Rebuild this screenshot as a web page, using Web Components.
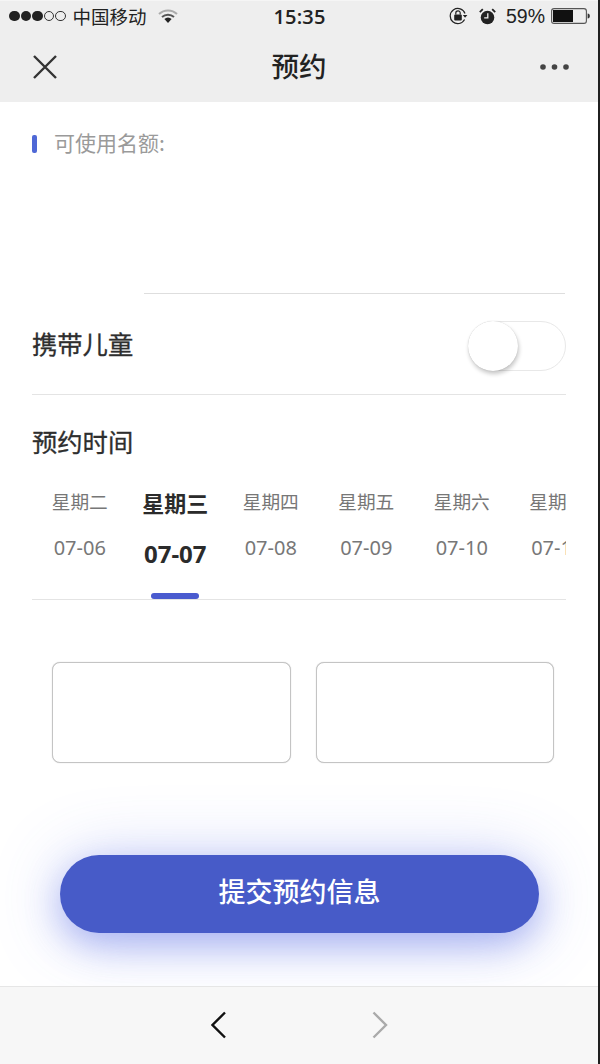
<!DOCTYPE html>
<html lang="zh">
<head>
<meta charset="utf-8">
<title>预约</title>
<style>
  html, body { margin: 0; background: #fff; }
  body { font-family: "Noto Sans CJK SC", "Noto Sans", sans-serif; }
  booking-page { width: 600px; height: 1064px; }
</style>
</head>
<body>
<booking-page>
  <status-bar></status-bar>
  <nav-bar title="预约"></nav-bar>
  <quota-section label="可使用名额:"></quota-section>
  <toggle-row label="携带儿童"></toggle-row>
  <day-picker title="预约时间"></day-picker>
  <slot-list>
    <slot-card></slot-card>
    <slot-card></slot-card>
  </slot-list>
  <submit-button label="提交预约信息"></submit-button>
  <browser-footer></browser-footer>
</booking-page>

<script>
class BookingPage extends HTMLElement {
  constructor() {
    super();
    this.attachShadow({ mode: 'open' });
    this.shadowRoot.innerHTML = `
      <style>
        :host { display: flex; background: #1f1f1f; }
        .screen {
          flex: 0 0 598px;
          height: 1064px;
          display: flex;
          flex-direction: column;
          background: #fff;
          overflow: hidden;
        }
        .edge { flex: 1; }
      </style>
      <div class="screen"><slot></slot></div>
      <div class="edge"></div>
    `;
  }
}

class StatusBar extends HTMLElement {
  constructor() {
    super();
    this.attachShadow({ mode: 'open' });
    this.shadowRoot.innerHTML = `
      <style>
        :host {
          display: grid;
          grid-template-columns: 1fr auto 1fr;
          align-items: center;
          height: 34px;
          box-sizing: border-box;
          padding: 0 8px 3px 9px;
          border-top: 1px solid #f5f5f5;
          background: #eee;
          color: #222;
        }
        .left, .right { display: flex; align-items: center; }
        .right { justify-content: flex-end; }
        .dots { display: flex; gap: 1px; margin-right: 7px; }
        .dots i {
          width: 10.5px;
          height: 10.5px;
          border-radius: 50%;
          background: #222;
          box-sizing: border-box;
        }
        .dots i.off { background: none; border: 1px solid #333; }
        .carrier { font-size: 18.5px; line-height: 30px; }
        .wifi { margin-left: 11px; }
        .time {
          font: 600 20px "Open Sans", "Liberation Sans", sans-serif;
          letter-spacing: .2px;
        }
        .pct { font: 19.5px "Liberation Sans", sans-serif; margin: 0 6px 0 10px; }
        .alarm { margin-left: 11px; }
      </style>
      <div class="left">
        <div class="dots"><i></i><i></i><i></i><i class="off"></i><i class="off"></i></div>
        <span class="carrier">中国移动</span>
        <svg class="wifi" width="20" height="16" viewBox="0 0 20 16">
          <path d="M1 6a13 13 0 0 1 18 0" fill="none" stroke="#aaa" stroke-width="2"/>
          <path d="M4 9a9 9 0 0 1 12 0" fill="none" stroke="#555" stroke-width="2"/>
          <path d="M10 15l-3.6-4a5 5 0 0 1 7.2 0z" fill="#222"/>
        </svg>
      </div>
      <div class="time">15:35</div>
      <div class="right">
        <svg width="19" height="18" viewBox="0 0 19 18">
          <path d="M15.6 12.5A7.6 7.6 0 1 1 16 6.5" fill="none" stroke="#222" stroke-width="1.2"/>
          <path d="M13.8 8h4.6l-2.3 2.8z" fill="#222"/>
          <rect x="5.2" y="7.6" width="7.6" height="5.8" rx="1" fill="#222"/>
          <path d="M6.8 7.6V6a2.2 2.2 0 0 1 4.4 0v1.6" fill="none" stroke="#222" stroke-width="1.2"/>
        </svg>
        <svg class="alarm" width="17" height="17" viewBox="0 0 17 17">
          <circle cx="8.5" cy="9.5" r="6.8" fill="#222"/>
          <path d="M.8 4.2L3.8 1.2M16.2 4.2L13.2 1.2" stroke="#222" stroke-width="1.8"/>
          <path d="M8.8 5.2v4.6H5.2" fill="none" stroke="#eee" stroke-width="1.3"/>
        </svg>
        <span class="pct">59%</span>
        <svg width="39" height="16" viewBox="0 0 39 16">
          <rect x=".6" y=".6" width="34.8" height="14.8" rx="2.5" fill="none" stroke="#555" stroke-width="1.1"/>
          <rect x="2" y="2" width="20" height="12" fill="#111"/>
          <path d="M36.6 5.5c1.6 0 2.2 1 2.2 2.5s-.6 2.5-2.2 2.5z" fill="#333"/>
        </svg>
      </div>
    `;
  }
}

class NavBar extends HTMLElement {
  constructor() {
    super();
    this.attachShadow({ mode: 'open' });
  }

  connectedCallback() {
    this.shadowRoot.innerHTML = `
      <style>
        :host {
          display: flex;
          align-items: center;
          justify-content: space-between;
          height: 68px;
          padding: 0 28px 0 32px;
          background: #eee;
          color: #222;
        }
        h1 { margin: 0 0 5px; font-size: 27.5px; font-weight: 500; line-height: 62px; }
        svg { display: block; margin-bottom: 2px; }
      </style>
      <svg width="26" height="26" viewBox="0 0 26 26">
        <path d="M2 2l22 22M24 2L2 24" stroke="#333" stroke-width="2.4" fill="none"/>
      </svg>
      <h1>${this.getAttribute('title')}</h1>
      <svg width="30" height="8" viewBox="0 0 30 8">
        <circle cx="3" cy="4" r="2.8" fill="#444"/>
        <circle cx="14.5" cy="4" r="2.8" fill="#444"/>
        <circle cx="26" cy="4" r="2.8" fill="#444"/>
      </svg>
    `;
  }
}

class QuotaSection extends HTMLElement {
  constructor() {
    super();
    this.attachShadow({ mode: 'open' });
  }

  connectedCallback() {
    this.shadowRoot.innerHTML = `
      <style>
        :host {
          display: block;
          height: 192px;
          box-sizing: border-box;
          padding: 27px 33px 0 32px;
        }
        .label {
          display: flex;
          align-items: center;
          gap: 17px;
          height: 30px;
          color: #9a9a9a;
          font-size: 21px;
        }
        .label span { padding-bottom: 3px; }
        .label i { width: 5px; height: 18px; border-radius: 2px; background: #4f68d6; }
        .rule { margin: 134px 0 0 112px; height: 1px; background: #dedede; }
      </style>
      <div class="label"><i></i><span>${this.getAttribute('label')}</span></div>
      <div class="rule"></div>
    `;
  }
}

class ToggleRow extends HTMLElement {
  constructor() {
    super();
    this.attachShadow({ mode: 'open' });
  }

  connectedCallback() {
    this.shadowRoot.innerHTML = `
      <style>
        :host {
          display: flex;
          align-items: center;
          justify-content: space-between;
          height: 101px;
          box-sizing: border-box;
          margin: 0 32px;
          padding-bottom: 1px;
          border-bottom: 1px solid #e4e4e4;
          color: #2e2e2e;
        }
        span { font-size: 25.3px; -webkit-text-stroke: .3px #2e2e2e; }
        .track {
          display: flex;
          width: 98px;
          height: 50px;
          margin-top: 5px;
          box-sizing: border-box;
          border: 1px solid #e8e8e8;
          border-radius: 25px;
          background: #fff;
        }
        .knob {
          width: 50px;
          height: 50px;
          margin: -1px;
          border-radius: 50%;
          background: #fff;
          box-shadow: 1px 3px 4px rgba(0, 0, 0, .22), 0 0 1px rgba(0, 0, 0, .18);
        }
      </style>
      <span>${this.getAttribute('label')}</span>
      <div class="track"><div class="knob"></div></div>
    `;
  }
}

class DayPicker extends HTMLElement {
  constructor() {
    super();
    this.attachShadow({ mode: 'open' });
    this.days = [
      ['星期二', '07-06'],
      ['星期三', '07-07', true],
      ['星期四', '07-08'],
      ['星期五', '07-09'],
      ['星期六', '07-10'],
      ['星期日', '07-11']
    ];
  }

  connectedCallback() {
    this.shadowRoot.innerHTML = `
      <style>
        :host {
          display: block;
          height: 206px;
          box-sizing: border-box;
          margin: 0 32px;
          border-bottom: 1px solid #e4e4e4;
          color: #2e2e2e;
        }
        h2 {
          margin: 0;
          height: 88px;
          font-size: 25.3px;
          font-weight: 400;
          line-height: 93px;
          -webkit-text-stroke: .3px #2e2e2e;
        }
        .days { display: flex; overflow: hidden; padding-top: 6px; }
        .day {
          flex: 0 0 95.5px;
          height: 110px;
          display: flex;
          flex-direction: column;
          align-items: center;
          color: #777;
        }
        .week { height: 26px; font-size: 18.7px; line-height: 24px; }
        .date { margin-top: 20px; font: 20px/26px "Noto Sans", sans-serif; }
        .day.on { color: #2b2b2b; }
        .day.on .week { font-size: 22px; font-weight: 700; line-height: 26px; }
        .day.on .date { margin-top: 25px; font-size: 24px; font-weight: 700; line-height: 28px; }
        .day.on::after {
          content: "";
          width: 48px;
          height: 6px;
          margin-top: 25px;
          border-radius: 3px;
          background: #4a5bcf;
        }
      </style>
      <h2>${this.getAttribute('title')}</h2>
      <div class="days">
        ${this.days.map(([week, date, on]) => `
          <div class="day${on ? ' on' : ''}">
            <span class="week">${week}</span>
            <span class="date">${date}</span>
          </div>
        `).join('')}
      </div>
    `;
  }
}

class SlotList extends HTMLElement {
  constructor() {
    super();
    this.attachShadow({ mode: 'open' });
    this.shadowRoot.innerHTML = `
      <style>
        :host {
          display: grid;
          grid-template-columns: 239px 238px;
          column-gap: 25px;
          padding: 62px 0 0 52px;
        }
      </style>
      <slot></slot>
    `;
  }
}

class SlotCard extends HTMLElement {
  constructor() {
    super();
    this.attachShadow({ mode: 'open' });
    this.shadowRoot.innerHTML = `
      <style>
        :host {
          display: block;
          height: 101px;
          box-sizing: border-box;
          border: 1px solid #c4c4c4;
          border-radius: 8px;
          background: #fff;
          box-shadow: 0 0 1px rgba(0, 0, 0, .25);
        }
      </style>
      <slot></slot>
    `;
  }
}

class SubmitButton extends HTMLElement {
  constructor() {
    super();
    this.attachShadow({ mode: 'open' });
  }

  connectedCallback() {
    this.shadowRoot.innerHTML = `
      <style>
        :host { display: block; padding: 92px 59px 0 60px; height: 223px; box-sizing: border-box; }
        div {
          height: 78px;
          border-radius: 39px;
          background: #475bc8;
          box-shadow: 0 12px 34px rgba(80, 100, 230, .38), 0 4px 70px rgba(80, 100, 230, .28);
          color: #fff;
          font-size: 27px;
          font-weight: 500;
          line-height: 72px;
          text-align: center;
        }
      </style>
      <div>${this.getAttribute('label')}</div>
    `;
  }
}

class BrowserFooter extends HTMLElement {
  constructor() {
    super();
    this.attachShadow({ mode: 'open' });
    this.shadowRoot.innerHTML = `
      <style>
        :host {
          display: flex;
          justify-content: center;
          gap: 145px;
          height: 78px;
          box-sizing: border-box;
          padding: 24px 0 0 0;
          border-top: 1px solid #e6e6e6;
          background: #f7f7f7;
        }
        svg { display: block; }
      </style>
      <svg width="16" height="28" viewBox="0 0 16 28">
        <path d="M14 1.5L1.5 14 14 26.5" fill="none" stroke="#111" stroke-width="2.4"/>
      </svg>
      <svg width="16" height="28" viewBox="0 0 16 28">
        <path d="M1.5 1.5L14 14 1.5 26.5" fill="none" stroke="#aaa" stroke-width="2.4"/>
      </svg>
    `;
  }
}

customElements.define('booking-page', BookingPage);
customElements.define('status-bar', StatusBar);
customElements.define('nav-bar', NavBar);
customElements.define('quota-section', QuotaSection);
customElements.define('toggle-row', ToggleRow);
customElements.define('day-picker', DayPicker);
customElements.define('slot-list', SlotList);
customElements.define('slot-card', SlotCard);
customElements.define('submit-button', SubmitButton);
customElements.define('browser-footer', BrowserFooter);
</script>
</body>
</html>
